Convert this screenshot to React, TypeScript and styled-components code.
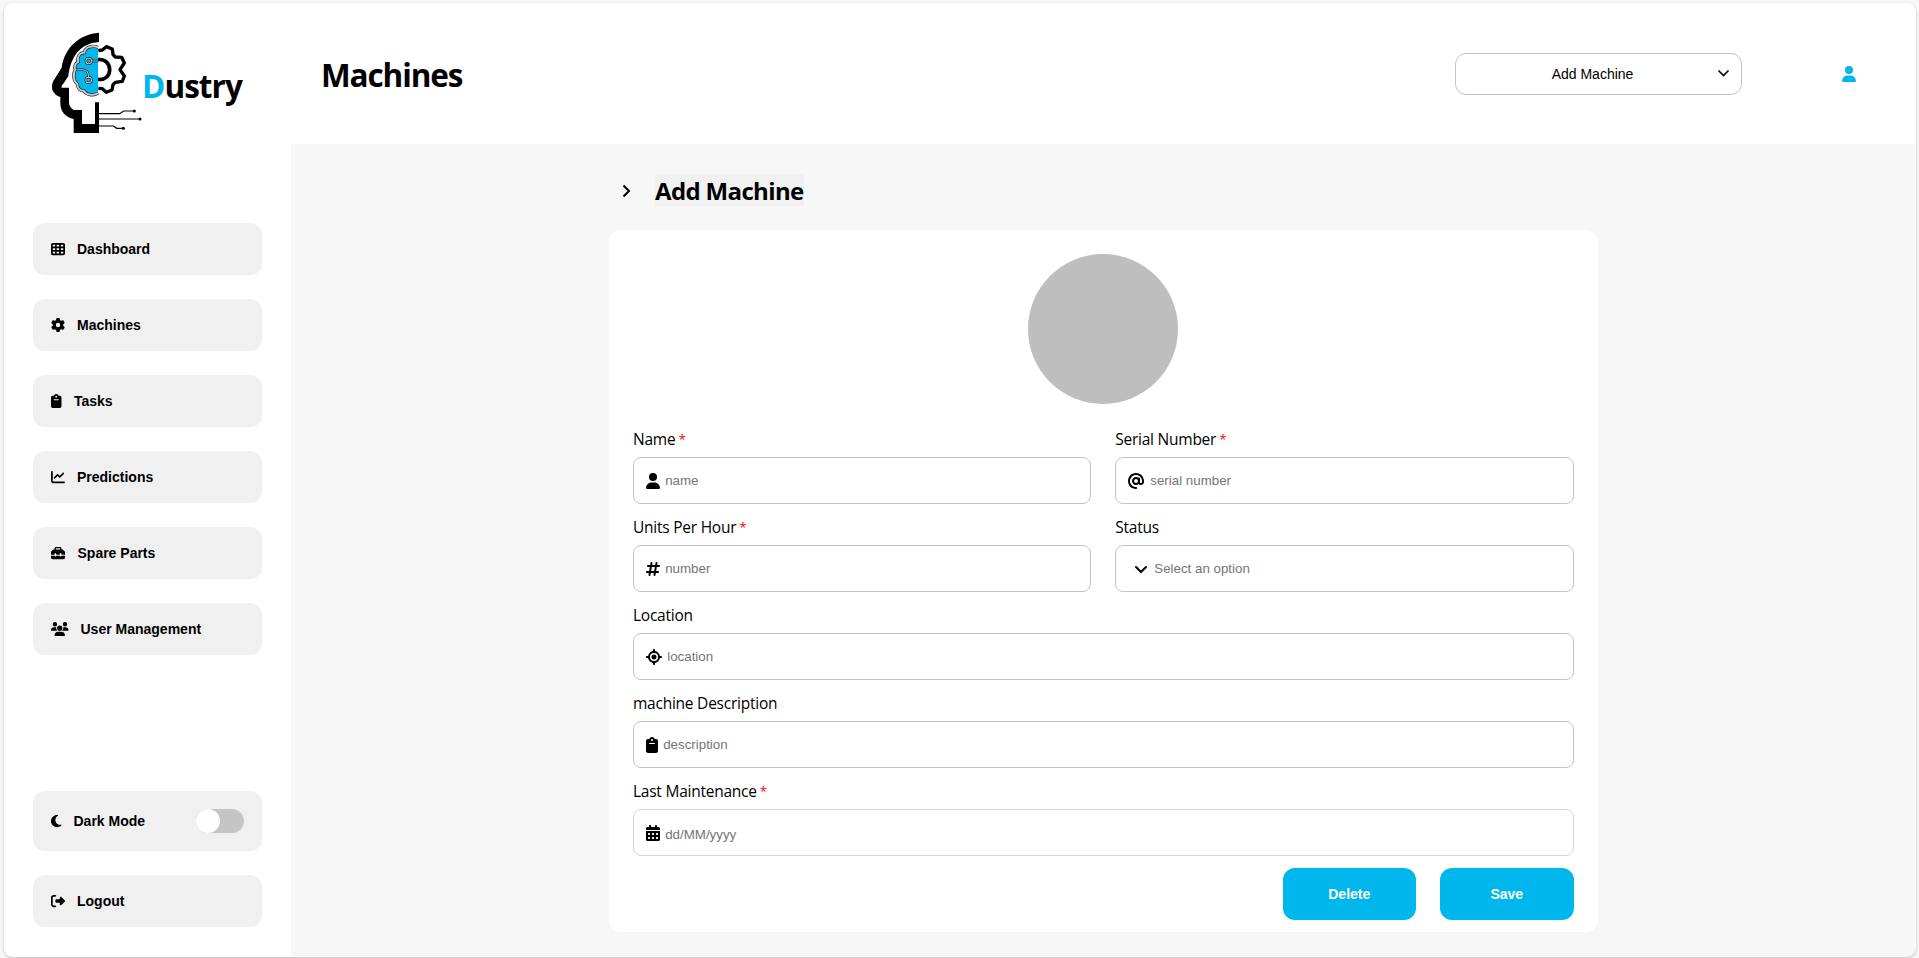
import React from "react";
import styled, { createGlobalStyle, css } from "styled-components";
import {
  FaTableCells,
  FaGear,
  FaClipboard,
  FaChartLine,
  FaToolbox,
  FaUsers,
  FaMoon,
  FaRightFromBracket,
  FaUser,
  FaAt,
  FaHashtag,
  FaAngleDown,
  FaLocationCrosshairs,
  FaCalendarDays,
} from "react-icons/fa6";

const ui = `"Open Sans", "Noto Sans", sans-serif`;
const control = `"Liberation Sans", Arial, sans-serif`;
const accent = "#00b7ed";

const GlobalStyle = createGlobalStyle`
  *, *::before, *::after { box-sizing: border-box; }
  body {
    margin: 0;
    background: #f7f7f7;
    color: #000;
    font-family: ${ui};
  }
  button, input, select { font-family: ${control}; }
`;

const Page = styled.div`
  height: 958px;
  padding: 3px 3px 1px 4px;
  overflow: hidden;
`;

const Shell = styled.div`
  display: grid;
  grid-template-columns: 287px 1fr;
  height: 954px;
  overflow: hidden;
  border-radius: 9px;
  background: #f7f7f7;
  box-shadow: 0 1px 3px rgba(0, 0, 0, 0.24);
`;

const Sidebar = styled.aside`
  display: flex;
  flex-direction: column;
  padding: 29px 29px 30px;
  background: #fff;
`;

const Brand = styled.div`
  display: flex;
  height: 191px;
  padding-left: 18px;
`;

const BrandName = styled.span`
  margin: 32px 0 0 -2px;
  font-size: 31.5px;
  line-height: 44px;
  font-weight: 700;
  letter-spacing: -0.95px;
`;

const BrandInitial = styled.span`
  color: ${accent};
`;

const Nav = styled.nav`
  display: flex;
  flex-direction: column;
  gap: 24px;
`;

const BottomNav = styled(Nav)`
  margin-top: auto;
`;

const itemStyle = css<{ $iconWidth?: number; $gap?: number }>`
  display: flex;
  align-items: center;
  width: 229px;
  padding: 0 18px;
  border: 0;
  border-radius: 12px;
  background: #f0f0f0;
  color: #000;
  font: 700 14px/16px ${control};
  text-align: left;
  white-space: nowrap;

  svg {
    height: 14px;
    width: ${(p) => p.$iconWidth ?? 14}px;
    margin-right: ${(p) => p.$gap ?? 12}px;
  }
`;

const NavItem = styled.button`
  ${itemStyle}
  height: 52px;
`;

const ModeRow = styled.div`
  ${itemStyle}
  height: 60px;
`;

const Switch = styled.span`
  width: 48px;
  height: 24px;
  margin-left: auto;
  border-radius: 12px;
  background: #c5c5c5;
`;

const Knob = styled.span`
  display: block;
  width: 24px;
  height: 24px;
  border-radius: 50%;
  background: #fff;
`;

const Main = styled.main`
  display: flex;
  flex-direction: column;
  align-items: stretch;
`;

const Header = styled.header`
  display: flex;
  align-items: center;
  height: 141px;
  padding: 0 60px 0 30px;
  background: #fff;
`;

const Title = styled.h1`
  margin: 0 auto 0 0;
  padding-top: 2px;
  font-size: 31.5px;
  line-height: 44px;
  font-weight: 700;
  letter-spacing: -1.1px;
`;

const MachinePicker = styled.button`
  display: flex;
  align-items: center;
  width: 287px;
  height: 42px;
  margin-right: 100px;
  padding: 0 11px 0 12px;
  border: 1px solid #c4c4c4;
  border-radius: 11px;
  background: #fff;
  color: #000;
  font-size: 14px;
`;

const PickerText = styled.span`
  flex: 1;
  text-align: center;
`;

const ProfileIcon = styled(FaUser)`
  width: 14px;
  height: 16px;
  color: ${accent};
`;

const Content = styled.section`
  width: 988.5px;
  margin: 30px 0 0 318px;
`;

const Crumb = styled.div`
  display: flex;
  align-items: center;
  height: 32px;
  padding-left: 13px;

  svg {
    margin-top: 2px;
  }
`;

const CrumbTitle = styled.h2`
  height: 32px;
  margin: 0 0 0 24px;
  background: #f1f1f1;
  font-size: 24px;
  line-height: 34px;
  font-weight: 700;
  letter-spacing: -0.65px;
`;

const Card = styled.form`
  display: flex;
  flex-direction: column;
  height: 702px;
  margin-top: 24px;
  padding: 24px 24px 12px;
  border-radius: 12px;
  background: #fff;
`;

const Avatar = styled.div`
  width: 150px;
  height: 150px;
  margin: 0 auto 24px;
  border-radius: 50%;
  background: #bebebe;
`;

const Fields = styled.div`
  display: grid;
  grid-template-columns: 1fr 1fr;
  gap: 12px 24px;
`;

const FieldBlock = styled.div<{ $wide?: boolean }>`
  grid-column: ${(p) => (p.$wide ? "1 / -1" : "auto")};
`;

const Label = styled.label`
  display: block;
  height: 21px;
  margin-bottom: 8px;
  font-size: 15.5px;
  line-height: 23px;
  letter-spacing: -0.24px;
`;

const Required = styled.span`
  margin-left: -0.8px;
  color: red;
  font-size: 13.5px;
  line-height: 1;
  vertical-align: 1px;
`;

const Box = styled.div<{ $soft?: boolean; $inset?: number; $iconWidth?: number; $gap?: number; $drop?: number }>`
  display: flex;
  align-items: center;
  gap: ${(p) => p.$gap ?? 5.2}px;
  height: 47px;
  padding-left: ${(p) => p.$inset ?? 12}px;
  border: 1px solid ${(p) => (p.$soft ? "#d6d6d6" : "#c4c4c4")};
  border-radius: 8px;
  background: #fff;

  svg {
    height: 16px;
    width: ${(p) => p.$iconWidth ?? 16}px;
    flex: none;
  }

  input {
    flex: 1;
    padding: ${(p) => p.$drop ?? 0}px 0 0;
    border: 0;
    outline: 0;
    background: transparent;
    font-size: 13.333px;
  }

  input::placeholder {
    color: #757575;
    opacity: 1;
  }
`;

const Actions = styled.div`
  display: flex;
  justify-content: flex-end;
  gap: 24px;
  margin-top: 12px;
`;

const ActionButton = styled.button`
  width: 133.5px;
  height: 52px;
  padding: 0;
  border: 0;
  border-radius: 12px;
  background: ${accent};
  color: #fff;
  font-size: 14px;
  font-weight: 700;
`;

function Logo() {
  const lobe =
    "M204 82C187 74 165 82 163 98C149 98 141 110 144 126C135 131 132 141 136 148C128 163 130 183 142 192C142 205 151 213 161 212C168 224 190 230 204 219";
  const traces = (
    <>
      <path d="M184 123H205M140 149H158C170 149 176 157 176 172" />
      <circle cx="176" cy="123" r="8.5" />
      <circle cx="176" cy="180" r="8.5" />
    </>
  );
  return (
    <svg width="93" height="102" viewBox="63 36 279 306" fill="none">
      <path
        fill="#000"
        d="M207 38C150 42 103 82 95 143L70 183C61 200 66 222 91 231V250C91 275 107 293 131 297V339H207V247H195V312H156V270H131C122 265 117 256 117 247V203H95C93 200 96 196 101 190L115 169C122 110 150 70 207 66Z"
      />
      <path
        stroke="#000"
        strokeWidth="10"
        strokeLinejoin="round"
        d="M205 92L217 90L229 80L247 87L249 104L256 111L275 112L283 129L270 149L283 168L277 184L256 187L249 194L246 210L229 217L217 206L205 205"
      />
      <path stroke="#000" strokeWidth="11" d="M203 119C226 116 239 131 239 149S226 181 203 178" />
      <path d={lobe} stroke="#222" strokeWidth="9.5" fill={accent} />
      <path d={lobe} stroke="#cdcdcd" strokeWidth="5.5" />
      <g stroke="#222" strokeWidth="7">
        {traces}
      </g>
      <g stroke="#bdbdbd" strokeWidth="3.2">
        {traces}
      </g>
      <path
        stroke="#000"
        strokeWidth="3.6"
        d="M207 281H269L281 273H313M207 297H330M207 318H250L260 325H280"
      />
      <g fill="#000">
        <circle cx="313" cy="273" r="4.5" />
        <circle cx="330" cy="297" r="4.5" />
        <circle cx="280" cy="325" r="4.5" />
      </g>
    </svg>
  );
}

const navItems = [
  { label: "Dashboard", Icon: FaTableCells },
  { label: "Machines", Icon: FaGear },
  { label: "Tasks", Icon: FaClipboard, width: 10.5, gap: 12.5 },
  { label: "Predictions", Icon: FaChartLine },
  { label: "Spare Parts", Icon: FaToolbox, gap: 12.5 },
  { label: "User Management", Icon: FaUsers, width: 17.5 },
];

const fields = [
  { label: "Name", hint: "name", Icon: FaUser, required: true, width: 14 },
  { label: "Serial Number", hint: "serial number", Icon: FaAt, required: true, gap: 6 },
  { label: "Units Per Hour", hint: "number", Icon: FaHashtag, required: true, width: 14 },
  { label: "Status", hint: "Select an option", Icon: FaAngleDown, inset: 18, width: 14, gap: 6 },
  { label: "Location", hint: "location", Icon: FaLocationCrosshairs, wide: true },
  { label: "machine Description", hint: "description", Icon: FaClipboard, wide: true, width: 12 },
  {
    label: "Last Maintenance",
    hint: "dd/MM/yyyy",
    Icon: FaCalendarDays,
    required: true,
    wide: true,
    soft: true,
    drop: 3,
    width: 14,
  },
];

export default function App() {
  return (
    <>
      <GlobalStyle />
      <Page>
        <Shell>
          <Sidebar>
            <Brand>
              <Logo />
              <BrandName>
                <BrandInitial>D</BrandInitial>ustry
              </BrandName>
            </Brand>
            <Nav>
              {navItems.map(({ label, Icon, width, gap }) => (
                <NavItem key={label} $iconWidth={width} $gap={gap}>
                  <Icon />
                  {label}
                </NavItem>
              ))}
            </Nav>
            <BottomNav>
              <ModeRow $iconWidth={10.5} $gap={12}>
                <FaMoon />
                Dark Mode
                <Switch>
                  <Knob />
                </Switch>
              </ModeRow>
              <NavItem>
                <FaRightFromBracket />
                Logout
              </NavItem>
            </BottomNav>
          </Sidebar>
          <Main>
            <Header>
              <Title>Machines</Title>
              <MachinePicker>
                <PickerText>Add Machine</PickerText>
                <svg width="13" height="9" viewBox="0 0 13 9" fill="none">
                  <path d="M1.5 1.5L6.5 6.5L11.5 1.5" stroke="#000" strokeWidth="1.6" />
                </svg>
              </MachinePicker>
              <ProfileIcon />
            </Header>
            <Content>
              <Crumb>
                <svg width="9" height="14" viewBox="0 0 9 14" fill="none">
                  <path d="M1.5 1.5L7 7L1.5 12.5" stroke="#000" strokeWidth="2" />
                </svg>
                <CrumbTitle>Add Machine</CrumbTitle>
              </Crumb>
              <Card>
                <Avatar />
                <Fields>
                  {fields.map(({ label, hint, Icon, required, wide, soft, inset, width, gap, drop }) => (
                    <FieldBlock key={label} $wide={wide}>
                      <Label>
                        {label} {required && <Required>*</Required>}
                      </Label>
                      <Box $soft={soft} $inset={inset} $iconWidth={width} $gap={gap} $drop={drop}>
                        <Icon />
                        <input placeholder={hint} />
                      </Box>
                    </FieldBlock>
                  ))}
                </Fields>
                <Actions>
                  <ActionButton type="button">Delete</ActionButton>
                  <ActionButton type="button">Save</ActionButton>
                </Actions>
              </Card>
            </Content>
          </Main>
        </Shell>
      </Page>
    </>
  );
}
